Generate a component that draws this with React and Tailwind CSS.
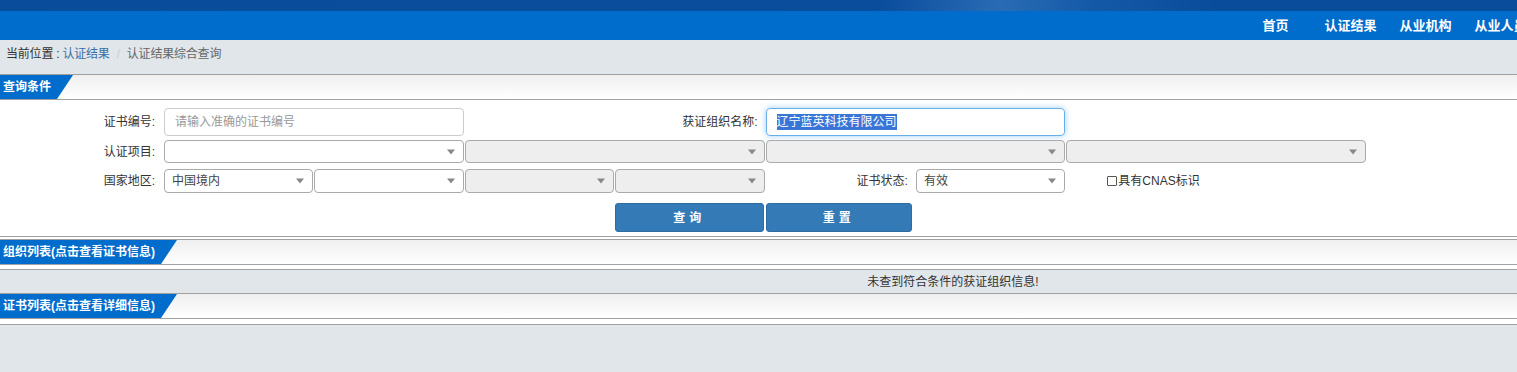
import React from "react";

const font = "font-['Liberation_Sans','Noto_Sans_CJK_SC',sans-serif]";

function Arrow() {
  return <span className="absolute right-[8px] top-1/2 -translate-y-1/2 border-x-[4px] border-t-[5px] border-x-transparent border-t-[#888]" />;
}

function Select({ value, disabled, className = "" }) {
  return (
    <div
      className={`relative h-full rounded-[4px] border border-[#aaa] text-[12px] leading-none text-[#444] flex items-center pl-[7px] ${
        disabled ? "bg-[#eee]" : "bg-white"
      } ${className}`}
    >
      {value}
      <Arrow />
    </div>
  );
}

function SectionHeader({ title }) {
  return (
    <div className="h-[26px] border-y border-[#a0a0a0] bg-gradient-to-b from-[#efefef] to-white flex">
      <div className="h-full bg-[#006dcc] text-white font-bold text-[12px] flex items-center pl-[3px] pr-[22px] [clip-path:polygon(0_0,100%_0,calc(100%-16px)_100%,0_100%)]">
        {title}
      </div>
    </div>
  );
}

export default function App() {
  const navItems = ["首页", "认证结果", "从业机构", "从业人员", "信息公告"];

  return (
    <div className={`${font} w-[1517px] h-[372px] overflow-hidden bg-[#e1e6ea] text-[#333]`}>
      {/* top banner */}
      <div className="h-[11px] bg-[linear-gradient(90deg,#0a4c9c_0%,#0b4d9d_58%,#2a6cb4_66%,#1459a8_72%,#0a4c9c_80%)]" />

      {/* nav */}
      <div className="h-[29px] bg-[#006dcc] flex pl-[1238px] overflow-hidden whitespace-nowrap">
        {navItems.map((n) => (
          <div key={n} className="w-[75px] shrink-0 text-center text-white font-bold text-[13px] leading-[29px]">
            {n}
          </div>
        ))}
      </div>

      {/* breadcrumb */}
      <div className="h-[34px] flex items-center pl-[6px] pb-[6px] text-[12px] tracking-[-0.2px]">
        <span className="text-[#333]">当前位置 :</span>
        <span className="text-[#3a6ea5] ml-[3px]">认证结果</span>
        <span className="text-[#ccc] mx-[7px]">/</span>
        <span className="text-[#666]">认证结果综合查询</span>
      </div>

      <SectionHeader title="查询条件" />

      {/* form */}
      <div className="bg-white pt-[8px] pb-[4px] border-b border-[#a0a0a0] text-[12px]">
        <div className="grid grid-cols-[164px_repeat(8,150.4px)] gap-y-0">
          {/* row 1 */}
          <div className="h-[28px] flex items-center justify-end pr-[9px]">证书编号:</div>
          <div className="col-span-2 h-[28px] pr-[1px]">
            <div className="h-full rounded-[4px] border border-[#ccc] flex items-center pl-[10px] text-[#999]">
              请输入准确的证书编号
            </div>
          </div>
          <div className="col-span-2 h-[28px] flex items-center justify-end pr-[8px]">获证组织名称:</div>
          <div className="col-span-2 h-[28px] pr-[1px]">
            <div className="h-full rounded-[4px] border border-[#66afe9] shadow-[0_0_6px_rgba(102,175,233,0.6)] flex items-center pl-[10px]">
              <span className="bg-[#3875d7] text-white text-[12px] leading-[16px]">辽宁蓝英科技有限公司</span>
            </div>
          </div>
          <div className="col-span-2" />

          {/* row 2 */}
          <div className="h-[23px] mt-[4px] flex items-center justify-end pr-[9px]">认证项目:</div>
          <div className="col-span-2 h-[23px] mt-[4px] pr-[1px]">
            <Select value="" />
          </div>
          <div className="col-span-2 h-[23px] mt-[4px] pr-[1px]">
            <Select value="" disabled />
          </div>
          <div className="col-span-2 h-[23px] mt-[4px] pr-[1px]">
            <Select value="" disabled />
          </div>
          <div className="col-span-2 h-[23px] mt-[4px] pr-[1px]">
            <Select value="" disabled />
          </div>

          {/* row 3 */}
          <div className="h-[24px] mt-[6px] flex items-center justify-end pr-[9px]">国家地区:</div>
          <div className="h-[24px] mt-[6px] pr-[1px]">
            <Select value="中国境内" />
          </div>
          <div className="h-[24px] mt-[6px] pr-[1px]">
            <Select value="" />
          </div>
          <div className="h-[24px] mt-[6px] pr-[1px]">
            <Select value="" disabled />
          </div>
          <div className="h-[24px] mt-[6px] pr-[1px]">
            <Select value="" disabled />
          </div>
          <div className="h-[24px] mt-[6px] flex items-center justify-end pr-[8px]">证书状态:</div>
          <div className="h-[24px] mt-[6px] pr-[1px]">
            <Select value="有效" />
          </div>
          <div className="col-span-2 h-[24px] mt-[6px] flex items-center pl-[41px]">
            <span className="w-[10px] h-[10px] border border-[#555] rounded-[1px] mr-[1px]" />
            具有CNAS标识
          </div>

          {/* row 4 */}
          <div className="col-span-4 h-[29px] mt-[10px]" />
          <div className="h-[29px] mt-[10px] pr-[2px]">
            <button className="w-full h-full rounded-[3px] bg-[#337ab7] border border-[#2e6da4] text-white text-[12px] font-bold tracking-[4px]">
              查询
            </button>
          </div>
          <div className="h-[29px] mt-[10px] pr-[4px]">
            <button className="w-full h-full rounded-[3px] bg-[#337ab7] border border-[#2e6da4] text-white text-[12px] font-bold tracking-[4px]">
              重置
            </button>
          </div>
          <div className="col-span-3" />
        </div>
      </div>

      <div className="h-[2px] bg-white" />
      <SectionHeader title="组织列表(点击查看证书信息)" />
      <div className="h-[4px] bg-white" />
      <div className="h-[24px] border-t border-[#a0a0a0] flex items-center justify-center pl-[389px] text-[12px] text-[#333]">
        未查到符合条件的获证组织信息!
      </div>
      <SectionHeader title="证书列表(点击查看详细信息)" />
      <div className="h-[5px] bg-white" />
      <div className="border-t border-[#a0a0a0]" />
    </div>
  );
}
